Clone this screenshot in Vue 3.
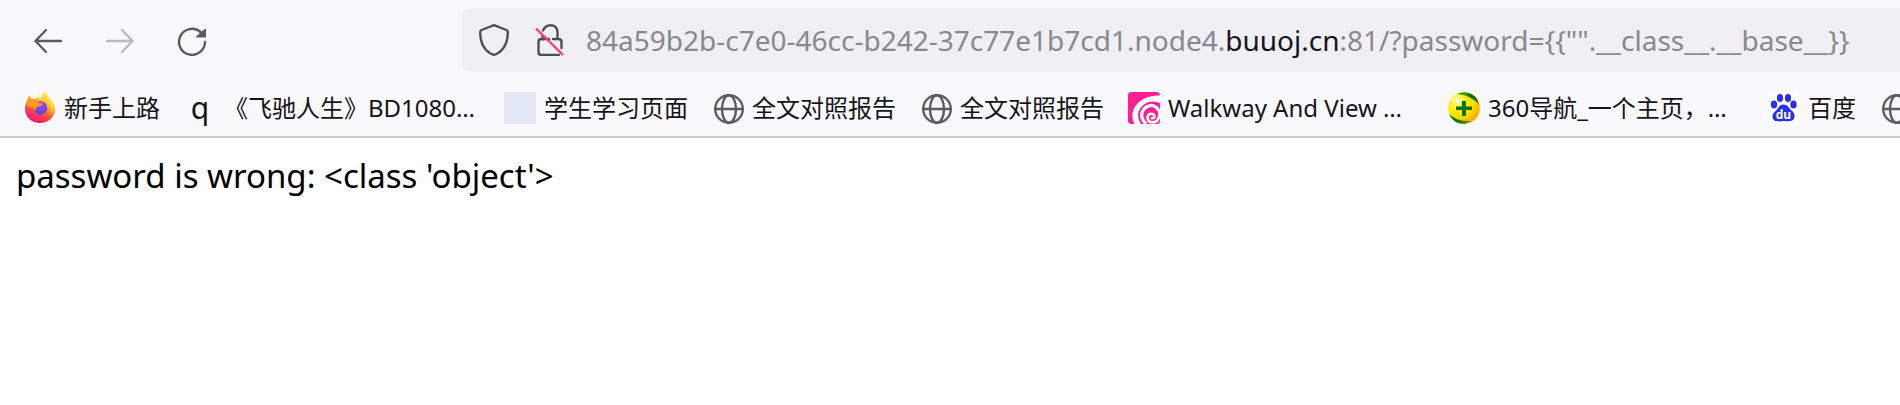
<script setup>
import { computed, ref } from 'vue'

const url = ref('84a59b2b-c7e0-46cc-b242-37c77e1b7cd1.node4.buuoj.cn:81/?password={{"".__class__.__base__}}')
const domain = 'buuoj.cn'

const urlParts = computed(() => {
  const at = url.value.indexOf(domain)
  if (at < 0) return { before: url.value, host: '', after: '' }
  return {
    before: url.value.slice(0, at),
    host: domain,
    after: url.value.slice(at + domain.length)
  }
})

const bookmarks = [
  { icon: 'firefox', label: '新手上路' },
  { icon: 'letter', label: '《飞驰人生》BD1080…', long: true },
  { icon: 'blank', label: '学生学习页面' },
  { icon: 'globe', label: '全文对照报告' },
  { icon: 'globe', label: '全文对照报告' },
  { icon: 'swirl', label: 'Walkway And View …', long: true },
  { icon: 'plus', label: '360导航_一个主页，…', long: true },
  { icon: 'paw', label: '百度' },
  { icon: 'globe', label: '' }
]

const message = "password is wrong: <class 'object'>"
</script>

<template>
  <div class="browser">
    <header class="chrome">
      <div class="toolbar">
        <nav class="buttons" aria-label="Navigation">
          <button type="button" aria-label="Back">
            <svg viewBox="0 0 32 32"><path d="M29 17H3.500M14 6 3.500 17 14 28" class="line" /></svg>
          </button>
          <button type="button" aria-label="Forward" disabled>
            <svg viewBox="0 0 32 32"><path d="M3 17h25.500M18 6l10.500 11L18 28" class="line" /></svg>
          </button>
          <button type="button" aria-label="Reload">
            <svg viewBox="0 0 32 32">
              <path d="M29 18A13 13 0 1 1 24.500 8" class="line" />
              <path d="M30 5v8.500H20.500q-.8-.4-.2-1.300L28.700 5q.8-.6 1.300 0Z" fill="#5b5b66" />
            </svg>
          </button>
        </nav>
        <div class="urlbar">
          <button type="button" aria-label="Tracking protection">
            <svg viewBox="0 0 32 32"><path d="M16 1.200 28.500 6q1.300.6 1.300 2C29.800 19 25 27 17.400 30.500q-1.400.6-2.800 0C7 27 2.200 19 2.200 8q0-1.400 1.300-2Z" class="line dark" /></svg>
          </button>
          <button type="button" aria-label="Connection is not secure">
            <svg viewBox="0 0 32 32">
              <path d="M9 6.500C10.500 3 13 1.200 16.500 1.200c4.300 0 7 3 7 7V15M19 15h5.500q3 0 3 3v6M8.500 12v3.500M15 15H7.500q-3 0-3 3v10q0 3 3 3H25" class="line dark" />
              <path d="M2 4.500 29 31" class="strike" />
            </svg>
          </button>
          <div class="address">
            <div class="formatted" aria-hidden="true">{{ urlParts.before }}<b>{{ urlParts.host }}</b>{{ urlParts.after }}</div>
            <input v-model="url" type="text" aria-label="Address" spellcheck="false" />
          </div>
        </div>
      </div>

      <nav class="bookmarks" aria-label="Bookmarks">
        <a v-for="(mark, i) in bookmarks" :key="i" href="#" :aria-label="mark.label || 'Bookmark'">
          <svg v-if="mark.icon === 'firefox'" viewBox="0 0 32 32">
            <defs>
              <linearGradient id="fox" x1=".8" y1=".05" x2=".3" y2="1">
                <stop offset="0" stop-color="#fff44f" />
                <stop offset=".35" stop-color="#ffb52b" />
                <stop offset=".62" stop-color="#ff5038" />
                <stop offset="1" stop-color="#f0128a" />
              </linearGradient>
              <radialGradient id="orb" cx=".6" cy=".3" r=".8">
                <stop offset="0" stop-color="#a43cf0" />
                <stop offset="1" stop-color="#4f4bd8" />
              </radialGradient>
            </defs>
            <path d="M20.500 0c3 2 3.500 4.500 5.300 7 4 3 5.200 7 5.200 10.500C31 25 24.500 31 16 31S1 25 1 17c0-4 1-7 3.500-10L5 4l3 3q3-1 4.500-.5 1.500-1.500 3-1.500-1 2 1 3 .5-5 4-8Z" fill="url(#fox)" />
            <circle cx="16.500" cy="16" r="6.700" fill="url(#orb)" />
            <path d="M2 13c1-5 3-8.500 3-9l3 4.500q3-1.500 5-.5 0 2.500 3 3l3 .5q0 2-3.500 2.700-2.500.3-3 1.300-1.500 2-.5 3.500-2-1-3-3.500-3.500 1-7-2.500Z" fill="#ff9820" />
            <path d="M20 5q5 4 5.500 10 1-2 .5-4 4 8-1 14 6-6 4-14-2-4-5-6l-2-4Z" fill="#ffe14a" opacity=".65" />
          </svg>
          <span v-else-if="mark.icon === 'letter'" class="icon letter" aria-hidden="true">q</span>
          <span v-else-if="mark.icon === 'blank'" class="icon blank"></span>
          <svg v-else-if="mark.icon === 'globe'" viewBox="0 0 32 32">
            <g class="line"><circle cx="17" cy="17" r="13.800" /><ellipse cx="17" cy="17" rx="7" ry="13.800" /><path d="M3 17h28" /></g>
          </svg>
          <svg v-else-if="mark.icon === 'swirl'" viewBox="0 0 32 32">
            <rect width="32" height="32" rx="3.500" fill="#ff1f93" />
            <path d="M32 3.500C16 3 4 12 4.500 25q.3 4 2 7h6.500Q9 26 10.500 20 14 10 25 9.500q4 0 7 1.500Z" fill="#fff" />
            <path d="M30.500 18C28 14 24 12.500 20.500 14 14.500 16 12.500 22 14.500 27q1.200 3 3.800 5" class="white" stroke-width="3.200" />
            <path d="M30.500 18c2 5 .5 9-2.500 11.500-4 2-8 .5-8.500-3.500 0-4 4.500-5.500 6.500-3 1 2-.3 3.500-2 3.300" class="white" stroke-width="2.600" stroke-linecap="round" />
          </svg>
          <svg v-else-if="mark.icon === 'plus'" viewBox="0 0 32 32">
            <defs>
              <radialGradient id="ball" cx=".3" cy=".28" r=".8">
                <stop offset="0" stop-color="#fffee0" />
                <stop offset=".3" stop-color="#fff21c" />
                <stop offset=".7" stop-color="#ffd400" />
                <stop offset="1" stop-color="#ffa200" />
              </radialGradient>
            </defs>
            <circle cx="16" cy="16" r="15.800" fill="url(#ball)" />
            <path d="M9 2q12-5 20 5l2 6Q23 3 9 2ZM1 22q9 8 22 7l-6 3Q5 32 1 22Z" fill="#389400" />
            <path d="M20 1q8 2 10.500 10-4-4-10.500-7ZM2 23q6 6 15 6.500-9 4-15-6.500Z" fill="#087400" />
            <path d="M14 9h4v5.500h6v3.500h-6v6h-4v-6H8v-3.500h6Z" fill="#087600" />
          </svg>
          <svg v-else viewBox="0 0 32 32">
            <rect width="32" height="32" rx="4" fill="#fff" />
            <g fill="#2932e1">
              <ellipse cx="6" cy="12.500" rx="3.200" ry="4" />
              <ellipse cx="12" cy="6" rx="3.100" ry="4" />
              <ellipse cx="20" cy="6" rx="3.100" ry="4" />
              <ellipse cx="25.500" cy="12.500" rx="3.200" ry="4" />
              <path d="M15.500 12.500c4 0 5 3 7.500 5.500 2.500 2 4 4 3.500 7-.5 4-4 5-10.500 4-7 1-11 .5-11.500-4-.5-3 2-5 4-7 2.500-2.500 3-5.500 7-5.500Z" />
            </g>
            <text x="15.500" y="27" text-anchor="middle" class="du">du</text>
          </svg>
          <span v-if="mark.label" class="label" :class="{ long: mark.long }">{{ mark.label }}</span>
        </a>
      </nav>
    </header>

    <main>{{ message }}</main>
  </div>
</template>

<style>
body {
  background: #fff;
  overflow: hidden;
}
</style>

<style scoped>
.browser {
  font-family: "Noto Sans", "Noto Sans CJK SC", sans-serif;
  color: #15141a;
}

.chrome {
  background: #f9f9fb;
  border-bottom: 2px solid #ccc;
  overflow: hidden;
}

.toolbar {
  display: flex;
  align-items: center;
  padding: 8px 0 8px 32px;
}

.buttons {
  display: flex;
  flex: none;
  gap: 40px;
  margin-right: 254px;
}

button {
  flex: none;
  width: 32px;
  height: 32px;
  padding: 0;
  border: 0;
  background: none;
}

button:disabled {
  opacity: 0.4;
}

svg {
  display: block;
  flex: none;
  width: 32px;
  height: 32px;
}

.line {
  fill: none;
  stroke: #5b5b66;
  stroke-width: 2.4;
  stroke-linecap: round;
  stroke-linejoin: round;
}

.dark {
  stroke: #4e4e54;
}

.strike {
  fill: none;
  stroke: #ff3b68;
  stroke-width: 2.4;
}

.urlbar {
  display: flex;
  flex: 1;
  align-items: center;
  gap: 24px;
  height: 64px;
  padding-left: 16px;
  border-radius: 8px 0 0 8px;
  background: #f0f0f4;
}

.address {
  position: relative;
  flex: 1;
  margin-left: -4px;
  font-size: 28px;
  line-height: 40px;
}

.formatted {
  color: #88888d;
  white-space: pre;
}

.formatted b {
  color: #15141a;
  font-weight: 400;
}

.address input {
  position: absolute;
  inset: 0;
  width: 100%;
  padding: 0;
  border: 0;
  outline: 0;
  background: none;
  color: transparent;
  caret-color: #15141a;
  font: inherit;
}

.bookmarks {
  display: flex;
  gap: 24px;
  padding: 12px 0 12px 24px;
}

.bookmarks a {
  display: flex;
  flex: none;
  align-items: center;
  gap: 8px;
  color: inherit;
  text-decoration: none;
}

.icon {
  flex: none;
  width: 32px;
  height: 32px;
}

.letter {
  font-size: 30px;
  line-height: 32px;
  text-align: center;
}

.blank {
  background: #e3eaf6;
}

.white {
  fill: none;
  stroke: #fff;
}

.du {
  fill: #fff;
  font: 700 12px "Open Sans", sans-serif;
}

.label {
  font-size: 24px;
  line-height: 32px;
  white-space: nowrap;
}

.long {
  width: 256px;
}

main {
  padding: 16px;
  color: #000;
  font-size: 33px;
  line-height: 44px;
}
</style>
